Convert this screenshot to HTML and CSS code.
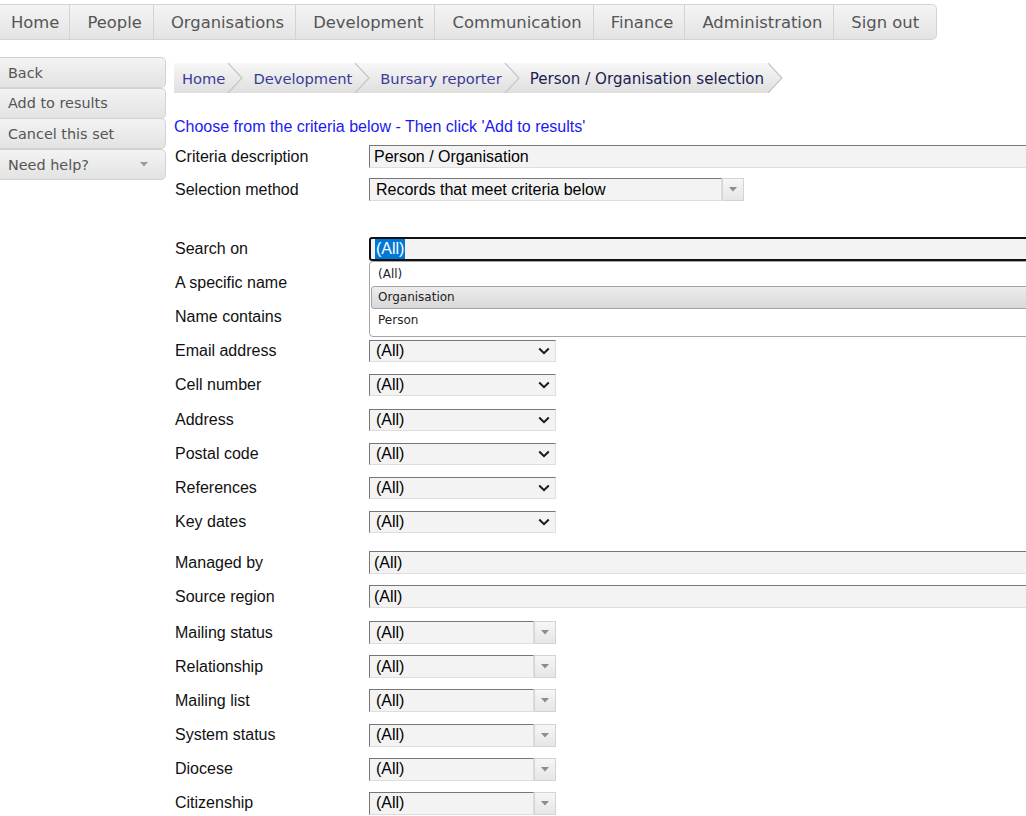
FILE: index.html
```html
<!DOCTYPE html>
<html lang="en">
<head>
<meta charset="utf-8">
<title>Person / Organisation selection</title>
<link rel="stylesheet" href="styles.css">
</head>
<body>
<nav class="topnav">
  <a class="topnav__item">Home</a>
  <a class="topnav__item">People</a>
  <a class="topnav__item">Organisations</a>
  <a class="topnav__item">Development</a>
  <a class="topnav__item">Communication</a>
  <a class="topnav__item">Finance</a>
  <a class="topnav__item">Administration</a>
  <a class="topnav__item">Sign out</a>
</nav>
<div class="layout">
  <aside class="sidebar">
    <a class="side-btn">Back</a>
    <a class="side-btn">Add to results</a>
    <a class="side-btn">Cancel this set</a>
    <a class="side-btn side-btn--menu">Need help?<svg class="side-btn__caret" width="8" height="5" viewBox="0 0 8 5"><polygon points="0,0 8,0 4,4.5" fill="#9a9a9a"/></svg></a>
  </aside>
  <main class="content">
    <div class="crumbs">
      <a class="crumb crumb--first">Home</a>
      <svg class="crumb-sep" width="16" height="30" viewBox="0 0 16 30"><polyline points="1,0 15,15 1,30" fill="none" stroke="#c6c6c6" stroke-width="1.2"/></svg>
      <a class="crumb">Development</a>
      <svg class="crumb-sep" width="16" height="30" viewBox="0 0 16 30"><polyline points="1,0 15,15 1,30" fill="none" stroke="#c6c6c6" stroke-width="1.2"/></svg>
      <a class="crumb">Bursary reporter</a>
      <svg class="crumb-sep" width="16" height="30" viewBox="0 0 16 30"><polyline points="1,0 15,15 1,30" fill="none" stroke="#c6c6c6" stroke-width="1.2"/></svg>
      <span class="crumb crumb--current">Person / Organisation selection</span>
      <svg class="crumb-end" width="16" height="30" viewBox="0 0 16 30">
        <defs><linearGradient id="crumbfill" x1="0" y1="0" x2="0" y2="1"><stop offset="0" stop-color="#f7f7f7"/><stop offset="1" stop-color="#dfdfdf"/></linearGradient></defs>
        <polygon points="0,0 1,0 15,15 1,30 0,30" fill="url(#crumbfill)"/>
        <polyline points="1,0 15,15 1,30" fill="none" stroke="#c6c6c6" stroke-width="1.2"/>
      </svg>
    </div>

    <p class="intro">Choose from the criteria below - Then click 'Add to results'</p>

    <div class="form">
      <div class="group group--first">
        <div class="row row--short"><label class="lbl">Criteria description</label><input class="textbox textbox--wide" type="text" value="Person / Organisation"></div>
        <div class="row row--short"><label class="lbl">Selection method</label>
          <div class="combo"><input class="combo__input combo__input--long" type="text" value="Records that meet criteria below"><span class="combo__btn"><svg width="8" height="5" viewBox="0 0 8 5"><polygon points="0,0 8,0 4,4.5" fill="#8c8c8c"/></svg></span></div>
        </div>
      </div>

      <div class="group group--search">
        <div class="row"><label class="lbl">Search on</label>
          <div class="field">
            <div class="select select--focus"><span class="select__hl">(All)</span></div>
            <ul class="dropdown">
              <li class="dropdown__opt">(All)</li>
              <li class="dropdown__opt dropdown__opt--hover">Organisation</li>
              <li class="dropdown__opt">Person</li>
            </ul>
          </div>
        </div>
        <div class="row"><label class="lbl">A specific name</label><input class="textbox textbox--wide" type="text" value=""></div>
        <div class="row"><label class="lbl">Name contains</label><input class="textbox textbox--wide" type="text" value=""></div>
        <div class="row"><label class="lbl">Email address</label><div class="select"><span>(All)</span><svg class="select__chev" width="12" height="8" viewBox="0 0 12 8"><path d="M1.2 1.5 L6 6.2 L10.8 1.5" fill="none" stroke="#1a1a1a" stroke-width="2"/></svg></div></div>
        <div class="row"><label class="lbl">Cell number</label><div class="select"><span>(All)</span><svg class="select__chev" width="12" height="8" viewBox="0 0 12 8"><path d="M1.2 1.5 L6 6.2 L10.8 1.5" fill="none" stroke="#1a1a1a" stroke-width="2"/></svg></div></div>
        <div class="row"><label class="lbl">Address</label><div class="select"><span>(All)</span><svg class="select__chev" width="12" height="8" viewBox="0 0 12 8"><path d="M1.2 1.5 L6 6.2 L10.8 1.5" fill="none" stroke="#1a1a1a" stroke-width="2"/></svg></div></div>
        <div class="row"><label class="lbl">Postal code</label><div class="select"><span>(All)</span><svg class="select__chev" width="12" height="8" viewBox="0 0 12 8"><path d="M1.2 1.5 L6 6.2 L10.8 1.5" fill="none" stroke="#1a1a1a" stroke-width="2"/></svg></div></div>
        <div class="row"><label class="lbl">References</label><div class="select"><span>(All)</span><svg class="select__chev" width="12" height="8" viewBox="0 0 12 8"><path d="M1.2 1.5 L6 6.2 L10.8 1.5" fill="none" stroke="#1a1a1a" stroke-width="2"/></svg></div></div>
        <div class="row"><label class="lbl">Key dates</label><div class="select"><span>(All)</span><svg class="select__chev" width="12" height="8" viewBox="0 0 12 8"><path d="M1.2 1.5 L6 6.2 L10.8 1.5" fill="none" stroke="#1a1a1a" stroke-width="2"/></svg></div></div>
      </div>

      <div class="group group--managed">
        <div class="row"><label class="lbl">Managed by</label><input class="textbox textbox--wide" type="text" value="(All)"></div>
        <div class="row"><label class="lbl">Source region</label><input class="textbox textbox--wide" type="text" value="(All)"></div>
      </div>

      <div class="group group--combos">
        <div class="row"><label class="lbl">Mailing status</label><div class="combo"><input class="combo__input" type="text" value="(All)"><span class="combo__btn"><svg width="8" height="5" viewBox="0 0 8 5"><polygon points="0,0 8,0 4,4.5" fill="#8c8c8c"/></svg></span></div></div>
        <div class="row"><label class="lbl">Relationship</label><div class="combo"><input class="combo__input" type="text" value="(All)"><span class="combo__btn"><svg width="8" height="5" viewBox="0 0 8 5"><polygon points="0,0 8,0 4,4.5" fill="#8c8c8c"/></svg></span></div></div>
        <div class="row"><label class="lbl">Mailing list</label><div class="combo"><input class="combo__input" type="text" value="(All)"><span class="combo__btn"><svg width="8" height="5" viewBox="0 0 8 5"><polygon points="0,0 8,0 4,4.5" fill="#8c8c8c"/></svg></span></div></div>
        <div class="row"><label class="lbl">System status</label><div class="combo"><input class="combo__input" type="text" value="(All)"><span class="combo__btn"><svg width="8" height="5" viewBox="0 0 8 5"><polygon points="0,0 8,0 4,4.5" fill="#8c8c8c"/></svg></span></div></div>
        <div class="row"><label class="lbl">Diocese</label><div class="combo"><input class="combo__input" type="text" value="(All)"><span class="combo__btn"><svg width="8" height="5" viewBox="0 0 8 5"><polygon points="0,0 8,0 4,4.5" fill="#8c8c8c"/></svg></span></div></div>
        <div class="row"><label class="lbl">Citizenship</label><div class="combo"><input class="combo__input" type="text" value="(All)"><span class="combo__btn"><svg width="8" height="5" viewBox="0 0 8 5"><polygon points="0,0 8,0 4,4.5" fill="#8c8c8c"/></svg></span></div></div>
      </div>
    </div>
  </main>
</div>
</body>
</html>
```

FILE: styles.css
```css
* { box-sizing: border-box; }

html, body {
  margin: 0;
  padding: 0;
  overflow: hidden;
  background: #fff;
}

body {
  width: 1026px;
  height: 816px;
  font-family: "Liberation Sans", Arial, sans-serif;
  font-size: 16px;
  color: #000;
}

/* ---------- top navigation ---------- */
.topnav {
  display: flex;
  width: max-content;
  height: 36px;
  margin: 4px 0 0 -7px;
  border: 1px solid #d3d3d3;
  border-radius: 0 5px 5px 0;
  background: linear-gradient(#f4f4f4, #e4e4e4);
  font-family: "DejaVu Sans", Verdana, sans-serif;
  font-size: 16.4px;
}

.topnav__item {
  display: flex;
  align-items: center;
  padding: 1px 11px 0 17px;
  border-left: 1px solid #d3d3d3;
  color: #555;
  text-decoration: none;
}

.topnav__item:first-child { border-left: none; padding-right: 10px; }
.topnav__item:last-child { padding-right: 17px; }

/* ---------- layout ---------- */
.layout {
  display: flex;
  align-items: flex-start;
  margin-top: 17px;
}

.sidebar {
  flex: none;
  width: 166px;
  display: flex;
  flex-direction: column;
  font-family: "DejaVu Sans", Verdana, sans-serif;
  font-size: 14.4px;
}

.side-btn {
  display: flex;
  align-items: center;
  height: 31px;
  padding-left: 8px;
  border: 1px solid #d2d2d2;
  border-left: none;
  border-radius: 0 5px 5px 0;
  background: linear-gradient(#f3f3f3, #e3e3e3);
  color: #555;
}

.side-btn + .side-btn { margin-top: -0.3px; }

.side-btn__caret {
  margin-left: auto;
  margin-right: 17px;
}

.content {
  flex: 1;
  min-width: 0;
  margin-left: 8px;
  padding-top: 6px;
  overflow: hidden;
  height: 760px;
}

/* ---------- breadcrumb ---------- */
.crumbs {
  display: flex;
  height: 30px;
  font-family: "DejaVu Sans", Verdana, sans-serif;
  font-size: 14.7px;
}

.crumb {
  display: flex;
  align-items: center;
  padding: 0 2px 0 10px;
  background: linear-gradient(#f7f7f7, #dfdfdf);
  color: #3b3b98;
  white-space: nowrap;
}

.crumb--first { padding-left: 8px; }
.crumb--current { color: #202050; font-size: 15.1px; padding: 2px 3px 0 10px; }

.crumb-sep {
  flex: none;
  display: block;
  background: linear-gradient(#f7f7f7, #dfdfdf);
}

.crumb-end {
  flex: none;
  display: block;
}

/* ---------- intro ---------- */
.intro {
  margin: 25px 0 0;
  line-height: 18px;
  color: #1a1af0;
}

/* ---------- form ---------- */
.form { margin-top: 4px; }

.group--search { margin-top: 25.6px; }
.group--managed { margin-top: 6.2px; }
.group--combos { margin-top: 1.6px; }

.row {
  display: flex;
  align-items: center;
  height: 34.2px;
}

.row--short { height: 33px; }

.lbl {
  flex: none;
  width: 195px;
  padding-left: 1px;
  white-space: nowrap;
  color: #111;
}

.field {
  position: relative;
  flex: none;
}

.textbox {
  flex: none;
  height: 23px;
  padding: 0 4px;
  border: 1px solid;
  border-color: #767676 #dedede #dedede #767676;
  border-radius: 0;
  background: #f3f3f3;
  font: 16px "Liberation Sans", Arial, sans-serif;
  color: #000;
  outline: none;
}

.textbox--wide { width: 720px; }

/* native-like select */
.select {
  flex: none;
  display: flex;
  align-items: center;
  justify-content: space-between;
  width: 187px;
  height: 22px;
  padding: 0 5px 0 6px;
  border: 1px solid;
  border-color: #767676 #dedede #dedede #767676;
  background: #f3f3f3;
}

.select--focus {
  width: 720px;
  height: 24px;
  padding: 0 0 0 4px;
  border: 2px solid #111;
  border-radius: 3px;
}

.select__hl {
  line-height: 20px;
  padding: 0 1px;
  background: #0078d7;
  color: #fff;
}

.select__chev { flex: none; }

/* dropdown list of the focused select */
.dropdown {
  position: absolute;
  top: 100%;
  left: 0;
  z-index: 10;
  width: 720px;
  margin: 0;
  padding: 1px 0 4px 1px;
  list-style: none;
  border: 1px solid #a6a6a6;
  border-radius: 4px;
  background: #fff;
  font-family: "DejaVu Sans", Verdana, sans-serif;
  font-size: 12px;
  color: #222;
}

.dropdown__opt {
  display: flex;
  align-items: center;
  height: 23px;
  padding-left: 7px;
}

.dropdown__opt--hover {
  border: 1px solid #a3a3a3;
  border-radius: 3px;
  padding-left: 6px;
  background: linear-gradient(#ededed, #d8d8d8);
}

/* jQuery-ui style combobox */
.combo {
  flex: none;
  display: flex;
}

.combo__input {
  width: 165px;
  height: 23px;
  padding: 0 6px;
  border: 1px solid;
  border-color: #767676 #dedede #dedede #767676;
  border-radius: 0;
  background: #f3f3f3;
  font: 16px "Liberation Sans", Arial, sans-serif;
  color: #000;
  outline: none;
}

.combo__input--long { width: 353px; }

.combo__btn {
  display: flex;
  align-items: center;
  justify-content: center;
  width: 22px;
  height: 23px;
  border: 1px solid #d3d3d3;
  background: linear-gradient(#f6f6f6, #e6e6e6);
}
```
